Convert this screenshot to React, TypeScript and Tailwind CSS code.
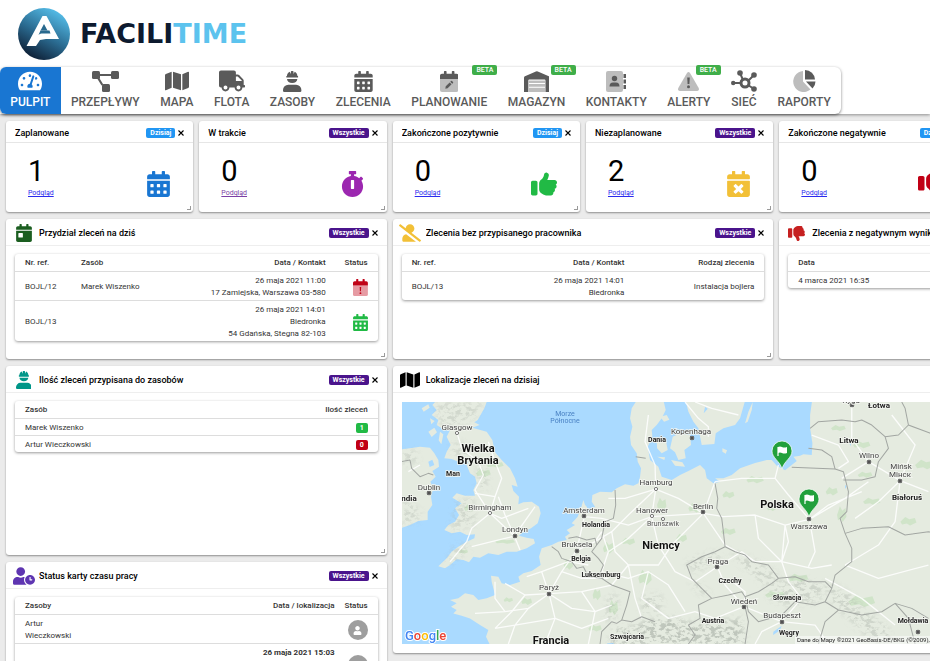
import React from "react";
import {
    FaTachometerAlt,
    FaMap,
    FaTruck,
    FaCalendarAlt,
    FaCalendarDay,
    FaCalendarTimes,
    FaStopwatch,
    FaUserSlash,
    FaUserClock,
    FaUser,
} from "react-icons/fa";
import { FaThumbsUp, FaThumbsDown } from "react-icons/fa6";

type Filter = "Dzisiaj" | "Wszystkie";

/* ---------- icons that the package does not have ---------- */

function FlowIcon({ className }: { className?: string }) {
    return (
        <svg viewBox="0 0 27 21" fill="currentColor" className={className}>
            <rect x="0" y="0" width="8" height="8" rx="1.5" />
            <rect x="19" y="0" width="8" height="8" rx="1.5" />
            <rect x="10" y="13" width="8" height="8" rx="1.5" />
            <path d="M7 3h13v2H7zM5.500 8l1.800-1 4 6.500-1.800 1z" />
        </svg>
    );
}

function HelmetIcon({ className }: { className?: string }) {
    return (
        <svg viewBox="0 0 448 512" fill="currentColor" className={className}>
            <path d="M88 160h272a8 8 0 0 0 8-8v-24a8 8 0 0 0-8-8h-8c0-46-27-86-66-104l-30 59V16a16 16 0 0 0-16-16h-32a16 16 0 0 0-16 16v59L162 16c-39 18-66 58-66 104h-8a8 8 0 0 0-8 8v24a8 8 0 0 0 8 8z" />
            <path d="M97 192a128 112 0 0 0 254 0z" />
            <path d="M320 336H128A128 128 0 0 0 0 464v16a32 32 0 0 0 32 32h384a32 32 0 0 0 32-32v-16a128 128 0 0 0-128-128z" />
        </svg>
    );
}

function PlanIcon({ className }: { className?: string }) {
    return (
        <svg viewBox="0 0 448 512" fill="currentColor" className={className}>
            <path d="M0 192h448v272a48 48 0 0 1-48 48H48a48 48 0 0 1-48-48z" opacity=".4" />
            <path d="M448 112v80H0v-80a48 48 0 0 1 48-48h48V16a16 16 0 0 1 16-16h32a16 16 0 0 1 16 16v48h128V16a16 16 0 0 1 16-16h32a16 16 0 0 1 16 16v48h48a48 48 0 0 1 48 48z" />
            <path d="M130 430l10-56 96-96 46 46-96 96zM250 264l20-20q12-8 22 0l26 26q8 10 0 22l-20 20z" />
        </svg>
    );
}

function WarehouseIcon({ className }: { className?: string }) {
    return (
        <svg viewBox="0 0 27 22" fill="currentColor" className={className}>
            <path d="M5 10h17v12H5z" opacity=".4" />
            <path d="M5 12.500h17v1H5zM5 16.500h17v1H5z" fill="white" />
            <path d="M1 5.500L12.500.5q1-.5 2 0L26 5.500q1 .5 1 1.500v15h-4.500V10q0-1-1-1h-16q-1 0-1 1v12H0V7q0-1 1-1.500z" />
        </svg>
    );
}

function ContactsIcon({ className }: { className?: string }) {
    return (
        <svg viewBox="0 0 20 21" fill="currentColor" className={className}>
            <rect width="17" height="21" rx="2" opacity=".4" />
            <path d="M17.500 3H20v4h-2.500zM17.500 8.500H20v4h-2.500zM17.500 14H20v4h-2.500z" />
            <circle cx="8.500" cy="7.500" r="2.700" />
            <path d="M3.500 15.500q0-4 3.500-4h3q3.500 0 3.500 4z" />
        </svg>
    );
}

function AlertIcon({ className }: { className?: string }) {
    return (
        <svg viewBox="0 0 21 19" fill="currentColor" className={className}>
            <path d="M9 1q1.500-2 3 0l8.700 15q.8 2.500-1.500 3H1.800Q-.5 18.500.3 16z" opacity=".4" />
            <path d="M9.200 5.500h2.600l-.4 6.500H9.600z" />
            <circle cx="10.500" cy="14.700" r="1.500" />
        </svg>
    );
}

function NetworkIcon({ className }: { className?: string }) {
    return (
        <svg viewBox="0 0 26 22" className={className}>
            <g stroke="currentColor" strokeWidth="2">
                <path d="M9 3l3 7M2 13h8M23 5l-6 6M23 19l-6-4" />
                <circle cx="14" cy="13" r="4" fill="none" strokeWidth="3" />
            </g>
            <g fill="currentColor">
                <circle cx="9" cy="3" r="2.800" />
                <circle cx="2.200" cy="13" r="2.200" />
                <circle cx="23" cy="5" r="2.800" />
                <circle cx="23" cy="19" r="2.800" />
            </g>
        </svg>
    );
}

function PieIcon({ className }: { className?: string }) {
    return (
        <svg viewBox="0 0 23 22" fill="currentColor" className={className}>
            <path d="M10 1v10.500l7.500 8A10.500 10.500 0 1 1 10 1z" opacity=".4" />
            <path d="M12 0a10 10 0 0 1 10 9.500H12z" />
            <path d="M13 11.500h9.500a10 10 0 0 1-3 7z" />
        </svg>
    );
}

function CalendarAlertIcon({ className }: { className?: string }) {
    return (
        <svg viewBox="0 0 448 512" fill="currentColor" className={className}>
            <path d="M0 192h448v272a48 48 0 0 1-48 48H48a48 48 0 0 1-48-48z" opacity=".4" />
            <path d="M448 112v80H0v-80a48 48 0 0 1 48-48h48V16a16 16 0 0 1 16-16h32a16 16 0 0 1 16 16v48h128V16a16 16 0 0 1 16-16h32a16 16 0 0 1 16 16v48h48a48 48 0 0 1 48 48z" />
            <path d="M202 240h44l-6 130h-32z" />
            <circle cx="224" cy="426" r="28" />
        </svg>
    );
}

function CloseIcon() {
    return (
        <svg viewBox="0 0 6 6" className="size-[6px]" stroke="black" strokeWidth="1.100">
            <path d="M.5.5l5 5M5.500.5l-5 5" />
        </svg>
    );
}

function Logo() {
    return (
        <div className="flex items-center gap-[10px]">
            <svg viewBox="0 0 52 52" className="size-[52px]">
                <defs>
                    <linearGradient id="logo" x1="0.800" y1="0.100" x2="0.300" y2="1">
                        <stop offset="0" stopColor="#53b9e4" />
                        <stop offset="0.500" stopColor="#2b6c92" />
                        <stop offset="1" stopColor="#0d1d33" />
                    </linearGradient>
                </defs>
                <circle cx="26" cy="26" r="26" fill="url(#logo)" />
                <path fill="white" d="M24.500 8h4L41 31H28l-6 1-4 6H8.500z" />
                <path fill="#29698e" d="M26 16l3.500 6.500H22.500z" />
                <path fill="#29698e" d="M20.500 27q1-1.500 3-1.500h9l-1-3h-9z" />
            </svg>
            <span className="font-['DejaVu_Sans',sans-serif] text-[27px] leading-8 font-bold text-[#0d1a2f]">
                FACILI<span className="text-[#5cc3ee]">TIME</span>
            </span>
        </div>
    );
}

const menu = [
    { label: "PULPIT", icon: <FaTachometerAlt className="size-6" />, active: true },
    { label: "PRZEPŁYWY", icon: <FlowIcon className="h-[21px]" /> },
    { label: "MAPA", icon: <FaMap className="h-[22px] w-6" /> },
    { label: "FLOTA", icon: <FaTruck className="h-[22px] w-[26px]" /> },
    { label: "ZASOBY", icon: <HelmetIcon className="h-[21px]" /> },
    { label: "ZLECENIA", icon: <FaCalendarAlt className="size-[21px]" /> },
    { label: "PLANOWANIE", icon: <PlanIcon className="h-[21px]" />, beta: true },
    { label: "MAGAZYN", icon: <WarehouseIcon className="h-[21px]" />, beta: true },
    { label: "KONTAKTY", icon: <ContactsIcon className="h-[21px]" /> },
    { label: "ALERTY", icon: <AlertIcon className="h-[19px]" />, beta: true },
    { label: "SIEĆ", icon: <NetworkIcon className="h-[22px]" /> },
    { label: "RAPORTY", icon: <PieIcon className="h-[22px]" /> },
];

function Header() {
    return (
        <header className="relative z-10 bg-white shadow-[0_1px_3px_rgba(0,0,0,0.4)]">
            <div className="flex h-[67px] items-center pl-[18px]">
                <Logo />
            </div>
            <nav className="flex w-[841px] rounded-md shadow-[0_1px_3px_rgba(0,0,0,0.5)]">
                {menu.map((item) => (
                    <a
                        key={item.label}
                        href="#"
                        className={
                            item.active
                                ? "relative flex h-[47px] flex-auto flex-col items-center rounded-l-md bg-[#1976d2] px-[10px] text-white"
                                : "relative flex h-[47px] flex-auto flex-col items-center px-[10px] text-[#5a5a5a]"
                        }
                    >
                        <span className="flex h-7 items-center">{item.icon}</span>
                        <span className="text-[12px] leading-[14px] font-medium">{item.label}</span>
                        {item.beta && (
                            <span className="absolute -top-[2px] right-0 rounded-[2px] bg-[#3fae49] px-1 text-[7px] leading-[10px] font-medium text-white">
                                BETA
                            </span>
                        )}
                    </a>
                ))}
            </nav>
        </header>
    );
}

function FilterBadge({ filter }: { filter: Filter }) {
    return (
        <button
            className={
                filter === "Dzisiaj"
                    ? "rounded-[2px] bg-[#2196f3] px-1 text-[7px] leading-[10px] font-bold text-white"
                    : "rounded-[2px] bg-[#4a148c] px-1 text-[7px] leading-[10px] font-bold text-white"
            }
        >
            {filter}
        </button>
    );
}

type CardProps = {
    title: string;
    filter?: Filter;
    icon?: React.ReactNode;
    className?: string;
    children: React.ReactNode;
};

function Card({ title, filter, icon, className = "", children }: CardProps) {
    return (
        <section className={`relative rounded-[3px] bg-white shadow-[0_1px_2px_rgba(0,0,0,0.4)] ${className}`}>
            <div
                className={
                    icon
                        ? "flex h-[27px] items-center border-b border-[#eeeeee] pt-[2px] pr-[9px] pl-[6px]"
                        : "flex h-[22px] items-center border-b border-[#e6e6e6] px-[9px] pt-[2px]"
                }
            >
                {icon && <span className="mr-1 flex w-[23px] justify-center">{icon}</span>}
                <h2 className="flex-1 truncate text-[9px] leading-3 font-medium text-black">{title}</h2>
                {filter && (
                    <>
                        <FilterBadge filter={filter} />
                        <button aria-label="Zamknij" className="ml-[3px]">
                            <CloseIcon />
                        </button>
                    </>
                )}
            </div>
            {children}
            {filter && <span className="absolute right-[2px] bottom-[2px] size-1 border-r border-b border-[#9a9a9a]" />}
        </section>
    );
}

type StatProps = {
    title: string;
    filter: Filter;
    value: number;
    visited?: boolean;
    icon: React.ReactNode;
};

function StatCard({ title, filter, value, visited, icon }: StatProps) {
    return (
        <Card title={title} filter={filter}>
            <div className="flex h-[69px] items-end justify-between pr-[23px] pb-[13px] pl-[22px]">
                <div className="flex flex-col">
                    <span className="text-[29px] leading-[32px] text-black">{value}</span>
                    <a
                        href="#"
                        className={
                            visited
                                ? "text-[7px] leading-3 text-[#7b3fa5] underline"
                                : "text-[7px] leading-3 text-[#2a2aee] underline"
                        }
                    >
                        Podgląd
                    </a>
                </div>
                <span className="mb-[2px]">{icon}</span>
            </div>
        </Card>
    );
}

const tableBox = "mx-[9px] mt-2 rounded-[3px] shadow-[0_1px_3px_rgba(0,0,0,0.4)]";
const table =
    "w-full text-[8px] leading-3 text-[#333333] [&_td]:px-[5px] [&_td]:pt-[3px] [&_td]:pb-px [&_th]:px-[5px] [&_th]:pt-[3px] [&_th]:pb-[2px] [&_th]:font-medium [&_tr>*:first-child]:pl-[10px] [&_tr>*:last-child]:pr-[10px] [&_tr:not(:last-child)]:border-b [&_thead_tr]:border-b [&_tr]:border-[#dddddd]";

function AssignedToday() {
    return (
        <div className={tableBox}>
            <table className={table}>
                <thead>
                    <tr className="text-left">
                        <th className="w-[61px]">Nr. ref.</th>
                        <th>Zasób</th>
                        <th className="text-right">Data / Kontakt</th>
                        <th className="w-[47px] text-right">Status</th>
                    </tr>
                </thead>
                <tbody>
                    <tr>
                        <td>BOJL/12</td>
                        <td>Marek Wiszenko</td>
                        <td className="text-right">
                            26 maja 2021 11:00
                            <br />
                            17 Zamiejska, Warszawa 03-580
                        </td>
                        <td>
                            <CalendarAlertIcon className="ml-auto h-[17px] text-[#c00418]" />
                        </td>
                    </tr>
                    <tr>
                        <td>BOJL/13</td>
                        <td></td>
                        <td className="text-right">
                            26 maja 2021 14:01
                            <br />
                            Biedronka
                            <br />
                            54 Gdańska, Stegna 82-103
                        </td>
                        <td>
                            <FaCalendarAlt className="ml-auto h-[17px] w-[15px] text-[#21ba45]" />
                        </td>
                    </tr>
                </tbody>
            </table>
        </div>
    );
}

function Unassigned() {
    return (
        <div className={tableBox}>
            <table className={table}>
                <thead>
                    <tr>
                        <th className="text-left">Nr. ref.</th>
                        <th className="text-right">Data / Kontakt</th>
                        <th className="w-[135px] text-right">Rodzaj zlecenia</th>
                    </tr>
                </thead>
                <tbody>
                    <tr>
                        <td>BOJL/13</td>
                        <td className="text-right">
                            26 maja 2021 14:01
                            <br />
                            Biedronka
                        </td>
                        <td className="text-right">Instalacja bojlera</td>
                    </tr>
                </tbody>
            </table>
        </div>
    );
}

function NegativeResults() {
    return (
        <div className={tableBox}>
            <table className={table}>
                <thead>
                    <tr>
                        <th className="text-left">Data</th>
                    </tr>
                </thead>
                <tbody>
                    <tr>
                        <td>4 marca 2021 16:35</td>
                    </tr>
                </tbody>
            </table>
        </div>
    );
}

function OrdersPerResource() {
    return (
        <div className={tableBox}>
            <table className={table}>
                <thead>
                    <tr>
                        <th className="text-left">Zasób</th>
                        <th className="text-right">Ilość zleceń</th>
                    </tr>
                </thead>
                <tbody>
                    <tr>
                        <td>Marek Wiszenko</td>
                        <td>
                            <span className="ml-auto block w-3 rounded-[2px] bg-[#21ba45] text-center text-[7px] leading-[10px] font-bold text-white">
                                1
                            </span>
                        </td>
                    </tr>
                    <tr>
                        <td>Artur Wieczkowski</td>
                        <td>
                            <span className="ml-auto block w-3 rounded-[2px] bg-[#c10015] text-center text-[7px] leading-[10px] font-bold text-white">
                                0
                            </span>
                        </td>
                    </tr>
                </tbody>
            </table>
        </div>
    );
}

function Avatar() {
    return (
        <span className="ml-auto flex size-5 items-center justify-center rounded-full bg-[#9e9e9e] text-white">
            <FaUser className="size-[9px]" />
        </span>
    );
}

function TimeCards() {
    return (
        <div className={tableBox}>
            <table className={table}>
                <thead>
                    <tr>
                        <th className="w-[75px] text-left">Zasoby</th>
                        <th className="text-right">Data / lokalizacja</th>
                        <th className="w-9 text-right">Status</th>
                    </tr>
                </thead>
                <tbody>
                    <tr>
                        <td>
                            Artur
                            <br />
                            Wieczkowski
                        </td>
                        <td></td>
                        <td>
                            <Avatar />
                        </td>
                    </tr>
                    <tr>
                        <td>Marek Wiszenko</td>
                        <td className="text-right">
                            <b>26 maja 2021 15:03</b>
                            <br />
                            Wybrzeże Stanisława Wyspiańskiego 27, 50-370
                            <br />
                            Wrocław
                        </td>
                        <td>
                            <Avatar />
                        </td>
                    </tr>
                </tbody>
            </table>
        </div>
    );
}

/* ---------- map ---------- */

type Place = { name: string; x: number; y: number; kind: "city" | "town" | "small" | "country" | "big" | "sea" };

const places: Place[] = [
    { name: "Morze", x: 163, y: 14, kind: "sea" },
    { name: "Północne", x: 163, y: 21, kind: "sea" },
    { name: "Glasgow", x: 55, y: 28, kind: "city" },
    { name: "Wielka", x: 76, y: 50, kind: "big" },
    { name: "Brytania", x: 76, y: 62, kind: "big" },
    { name: "Man", x: 51, y: 74, kind: "small" },
    { name: "Dublin", x: 27, y: 88, kind: "city" },
    { name: "ndia", x: 7, y: 99, kind: "country" },
    { name: "Birmingham", x: 88, y: 108, kind: "city" },
    { name: "Londyn", x: 113, y: 130, kind: "city" },
    { name: "Amsterdam", x: 182, y: 111, kind: "city" },
    { name: "Holandia", x: 194, y: 125, kind: "small" },
    { name: "Bruksela", x: 175, y: 145, kind: "city" },
    { name: "Belgia", x: 179, y: 159, kind: "small" },
    { name: "Luksemburg", x: 199, y: 175, kind: "small" },
    { name: "Paryż", x: 147, y: 188, kind: "city" },
    { name: "Francja", x: 149, y: 242, kind: "big" },
    { name: "Szwajcaria", x: 225, y: 237, kind: "small" },
    { name: "Dania", x: 255, y: 40, kind: "small" },
    { name: "Kopenhaga", x: 289, y: 32, kind: "city" },
    { name: "Hamburg", x: 254, y: 83, kind: "city" },
    { name: "Hanower", x: 250, y: 111, kind: "city" },
    { name: "Brunszwik", x: 261, y: 124, kind: "town" },
    { name: "Berlin", x: 301, y: 107, kind: "city" },
    { name: "Niemcy", x: 259, y: 147, kind: "big" },
    { name: "Polska", x: 375, y: 106, kind: "big" },
    { name: "Warszawa", x: 407, y: 127, kind: "city" },
    { name: "Praga", x: 316, y: 162, kind: "city" },
    { name: "Czechy", x: 328, y: 181, kind: "small" },
    { name: "Słowacja", x: 385, y: 198, kind: "small" },
    { name: "Wiedeń", x: 342, y: 202, kind: "city" },
    { name: "Austria", x: 311, y: 221, kind: "small" },
    { name: "Budapeszt", x: 380, y: 216, kind: "city" },
    { name: "Węgry", x: 387, y: 233, kind: "small" },
    { name: "Ryga", x: 449, y: 1, kind: "city" },
    { name: "Łotwa", x: 477, y: 6, kind: "country" },
    { name: "Litwa", x: 447, y: 41, kind: "country" },
    { name: "Wilno", x: 467, y: 56, kind: "city" },
    { name: "Mińsk", x: 499, y: 67, kind: "city" },
    { name: "Мінск", x: 498, y: 75, kind: "city" },
    { name: "Białoruś", x: 505, y: 98, kind: "country" },
    { name: "Mołdawia", x: 511, y: 221, kind: "small" },
];

const placeClass = {
    city: "fill-[#444444] stroke-[#f4f6f1] text-[8px]",
    town: "fill-[#555555] stroke-[#f4f6f1] text-[7px]",
    small: "fill-[#222222] stroke-[#f4f6f1] text-[7px] font-bold",
    country: "fill-[#222222] stroke-[#f4f6f1] text-[8px] font-bold",
    big: "fill-[#111111] stroke-[#f4f6f1] text-[11px] font-bold",
    sea: "fill-[#4a82c4] stroke-transparent text-[7px]",
};

const capitals = [
    [27, 91],
    [113, 134],
    [182, 114],
    [175, 149],
    [147, 192],
    [290, 36],
    [301, 110],
    [407, 117],
    [315, 165],
    [342, 205],
    [380, 220],
    [450, 3],
    [467, 60],
    [498, 79],
    [516, 230],
];

const towns = [
    [55, 31],
    [88, 111],
    [254, 87],
    [250, 114],
    [261, 117],
];

const pins = [
    [380, 49],
    [407, 97],
];

const roads = [
    "M358 513L285 445L240 375L265 330L250 290L200 250L185 200",
    "M285 445L300 395L320 340L300 290L280 230M300 395L240 385M285 445L230 490L215 530L165 590M358 513L290 530L230 545M358 513L420 425M358 513L375 555M358 513L330 450L310 395M285 445L320 460L400 430",
    "M462 686L440 620L395 635M462 686L390 690L330 655M462 686L400 730L330 740L240 745M462 686L500 620L545 557L568 455M462 686L560 680L650 660L700 600",
    "M462 686L480 760L450 837M400 730L360 780L340 837M480 760L560 790L640 760M462 686L530 730L600 740L650 720M390 690L350 740L300 790M500 620L560 640L640 640M440 620L520 590L580 600M330 740L300 700L300 650M560 680L600 740L580 837M300 790L360 780L480 760",
    "M545 557L600 530L650 500L700 450L782 372M568 455L620 460L700 480L770 455L925 445M620 500L640 560L620 620L700 640L760 620L820 660L870 740M650 500L660 560L700 600L790 600L830 540L925 445M782 372L850 400L925 445L960 350M770 455L790 540L840 620L900 650L967 605",
    "M782 372L780 300L750 230L760 150M782 372L690 400L640 400M770 455L782 372M700 600L720 700L740 760M640 560L700 520L770 455M620 500L600 530M760 620L740 700L820 760L900 740",
    "M925 445L985 455L1080 450L1170 480L1243 463L1350 400L1420 350M1243 463L1180 390L1140 340L1150 300M1170 480L1160 590L1080 590L990 540L925 445M1160 590L1250 610L1310 600M1243 463L1300 420L1400 380M1080 450L1090 520L1160 590M1243 463L1260 560L1240 605M1140 340L1040 340L960 350M1170 480L1180 530L1160 590",
    "M967 605L1040 560L1080 590M967 605L990 660L1047 725L1160 770M1047 725L960 760L900 740M1160 770L1220 700L1180 650L1160 590M1160 770L1100 800L1080 837M1160 770L1260 780L1300 837M1047 725L1050 680L1000 640",
    "M1250 210L1330 240L1360 290L1330 310M1420 290L1370 220L1370 120M1420 290L1515 347L1600 380M1515 347L1450 410L1380 460M1515 347L1500 470L1450 540L1350 600M1420 290L1340 340M1515 347L1560 240L1490 150",
    "M870 111L910 160L940 185L940 215M900 111L950 130L1030 150M75 300L40 320M1350 600L1450 640L1600 600M1290 640L1400 700L1500 780",
];

const borders = [
    "M470 545L490 560L500 580L530 590L545 610L565 605L580 635L620 640L650 660L705 680L695 720L680 765L665 775L650 770M520 520L545 515L575 525L600 520L605 540L590 560L610 580L625 600L615 625L625 640M605 540L620 520L630 470L655 460L662 420L660 375M722 275L752 280",
    "M650 770L620 800L615 837M680 765L710 770L740 755L780 770M960 355L968 400L965 430L980 460L985 500L990 545L960 560L920 575L875 600L890 640L920 670L950 700L1000 690L1040 680L1050 695L1090 680L1130 655L1150 640L1120 600L1070 590L1050 570L1020 560L990 545",
    "M950 700L910 720L915 760L880 780M1150 640L1200 635L1240 650L1290 650L1310 670L1320 630L1370 590L1370 550L1350 505L1335 460L1355 440L1360 380L1345 320L1320 312L1190 307M1050 695L1060 740L1090 770L1160 750L1200 710L1260 720L1290 710L1310 670",
    "M1240 250L1280 255L1310 275L1320 312M1345 345L1400 345L1440 335L1450 290L1480 250L1470 215L1430 180L1400 165L1380 170L1340 165L1270 170L1245 190M1470 215L1510 210L1540 180L1530 130L1520 111M1540 180L1580 195L1620 210M1350 505L1400 490L1480 485L1530 510L1600 500L1700 520",
    "M1290 710L1330 735L1400 750L1460 740L1500 715L1550 730L1600 760M1500 715L1540 760L1560 837M1330 735L1290 770L1270 837M1050 725L1060 770L1050 837M20 290L45 285L50 310L75 335L100 325L115 330M880 780L900 810L880 837",
];

const forests = [
    [265, 325, 22, 14],
    [300, 300, 26, 10],
    [225, 430, 18, 12],
    [330, 530, 30, 8],
    [205, 560, 14, 8],
    [395, 710, 16, 12],
    [340, 705, 14, 8],
    [520, 600, 14, 18],
    [655, 730, 14, 26],
    [605, 690, 12, 20],
    [600, 790, 20, 12],
    [640, 550, 16, 20],
    [700, 530, 20, 12],
    [750, 640, 20, 26],
    [860, 520, 16, 14],
    [900, 430, 20, 16],
    [800, 420, 14, 22],
    [1080, 345, 26, 12],
    [1000, 390, 18, 12],
    [1130, 430, 14, 10],
    [1000, 500, 22, 12],
    [1310, 380, 18, 14],
    [1340, 450, 14, 26],
    [1210, 640, 30, 14],
    [1410, 330, 22, 10],
    [1430, 410, 26, 12],
    [1540, 470, 24, 14],
    [1400, 240, 26, 12],
    [1330, 190, 22, 10],
    [1590, 300, 30, 16],
    [1400, 710, 40, 20],
    [1140, 690, 30, 12],
];

function OrdersMap() {
    return (
        <svg
            viewBox="0 0 750 242"
            preserveAspectRatio="xMinYMin slice"
            className="h-[242px] w-full"
            role="img"
            aria-label="Mapa zleceń"
        >
            <defs>
                {/* rough shading for hills and mountains */}
                <filter id="relief" x="0" y="0" width="100%" height="100%">
                    <feTurbulence type="fractalNoise" baseFrequency="0.060 0.090" numOctaves="4" seed="7" result="noise" />
                    <feColorMatrix
                        in="noise"
                        type="matrix"
                        values="0 0 0 0 0.380  0 0 0 0 0.420  0 0 0 0 0.370  6 0 0 0 -2.800"
                        result="rock"
                    />
                    <feGaussianBlur in="SourceAlpha" stdDeviation="9" result="soft" />
                    <feComposite in="rock" in2="soft" operator="in" />
                </filter>
            </defs>
            <rect width="750" height="242" fill="#aadaff" />
            <g transform="scale(0.3334) translate(-21 -111)" strokeLinejoin="round">
                <g fill="#e5ebe0">
                    <path d="M275 111L268 130L248 165L238 172L254 180L232 188L256 195L275 200L292 225L300 262L320 285L345 310L360 340L368 365L350 360L355 378L372 395L370 418L385 412L410 410L432 425L437 445L428 475L408 490L385 500L372 512L395 518L416 522L420 535L395 550L365 560L335 560L310 570L280 565L255 578L235 575L222 592L205 585L185 583L165 600L150 610L130 604L155 580L170 560L190 545L215 530L238 520L240 508L215 510L195 500L170 505L148 495L160 480L180 470L192 450L180 430L200 415L172 398L185 385L210 392L240 392L235 375L245 355L240 335L225 325L215 300L220 290L190 290L170 282L148 280L155 260L167 240L155 215L165 195L140 190L125 180L130 165L110 150L125 135L112 120L120 111Z" />
                    <path d="M100 200l18-12 8 14-16 14zM135 200l10 8-6 30-8-12zM80 130l20-12 4 10-18 12zM105 160l14 8-10 10zM170 322l8-6-4 12z" />
                    <path d="M0 255L45 250L75 245L105 248L118 265L130 285L132 305L112 318L122 335L106 350L115 370L108 395L112 420L98 440L98 465L70 468L45 480L0 495Z" />
                    <path d="M722 111L710 130L705 160L712 185L705 215L708 240L725 265L728 290L738 310L735 335L730 355L715 362L690 358L665 370L650 382L615 380L592 390L590 410L600 425L585 435L570 420L565 405L558 430L548 455L530 475L540 480L515 495L525 505L510 515L515 525L490 530L470 540L440 550L432 575L437 600L410 618L385 625L370 635L375 650L345 660L320 655L310 635L288 632L290 650L300 690L275 700L250 705L235 690L210 685L190 700L165 705L185 715L168 725L185 735L175 745L200 752L225 760L255 780L280 795L273 815L285 840L2300 840L2300 100L722 100Z" />
                </g>
                {/* Baltic */}
                <path
                    fill="#aadaff"
                    d="M805 105L812 135L800 160L785 180L770 195L772 215L758 245L765 285L790 305L800 335L830 345L855 330L880 318L915 300L930 315L935 340L955 355L975 350L960 340L985 340L1010 330L1035 310L1080 294L1115 285L1130 285L1145 302L1170 316L1190 300L1205 288L1195 275L1215 272L1225 268L1250 270L1252 235L1245 190L1245 150L1252 100Z"
                />
                <g fill="#e5ebe0">
                    <path d="M870 100L880 140L895 170L910 190L920 240L958 237L962 205L985 190L1020 180L1035 160L1052 100Z" />
                    <path d="M833 215L855 205L885 210L888 240L868 255L872 280L850 285L840 262L825 250ZM785 222L812 225L818 255L800 265L786 250ZM828 285L862 292L870 305L840 302ZM982 250l14 6-4 10-10-6zM1073 111L1060 140L1050 175L1058 170L1070 135ZM795 155l20-5 8 14-16 6zM786 275l24 2-2 8z" />
                </g>
                <g fill="#aadaff">
                    <path d="M575 425l12-8 8 14-14 12zM1362 230l6 4-2 10zM1135 800l25-18-6 14-20 14zM636 835l20-2v8h-22zM100 290l12-6 6 16-14 6zM930 125l8 6-12 14zM1350 360l5 4-5 8z" />
                </g>
                <g fill="#cbe3c4" opacity="0.800">
                    {forests.map(([x, y, rx, ry]) => (
                        <path
                            key={`${x}-${y}`}
                            d={`M${x - rx} ${y}l${rx * 0.6} ${-ry} ${rx * 0.5} ${ry * 0.5} ${rx * 0.7} ${-ry * 0.3} ${rx * 0.2} ${ry} ${-rx * 0.8} ${ry * 0.6} ${-rx * 0.4} ${-ry * 0.4} ${-rx * 0.6} ${ry * 0.2}z`}
                        />
                    ))}
                </g>
                <g filter="url(#relief)" opacity="0.600">
                    <path d="M125 111H265L235 160L170 185L130 175ZM165 240L200 230L240 270L190 285ZM185 410L235 400L240 480L165 495ZM20 260L60 255L70 290L25 300ZM20 400L70 430L80 460L20 480ZM245 290L270 280L280 370L250 370ZM180 540L230 540L180 590L150 600Z" opacity="0.500" />
                    <path d="M700 790L780 765L900 775L1040 760L1050 840H640L660 790Z" />
                    <path d="M740 770L830 755L890 780L880 837H750Z" />
                    <path d="M640 690L670 690L660 760L630 770ZM740 690L800 690L800 740L740 740ZM870 590L960 560L980 580L900 620ZM1000 555L1090 590L1150 630L1110 660L1050 610ZM890 640L950 690L920 690L890 660ZM1130 650L1220 640L1290 660L1270 710L1180 720L1120 700ZM1290 650L1360 680L1400 730L1470 780L1500 837H1440L1370 770L1310 710Z" opacity="0.600" />
                </g>
                <g fill="none" stroke="white" strokeWidth="4" opacity="0.850">
                    {roads.map((d) => (
                        <path key={d} d={d} />
                    ))}
                </g>
                <g fill="none" stroke="#a2a6a2" strokeWidth="3">
                    {borders.map((d) => (
                        <path key={d} d={d} />
                    ))}
                </g>
            </g>
            <g fill="#444444">
                {capitals.map(([x, y]) => (
                    <g key={`${x}-${y}`}>
                        <circle cx={x} cy={y} r="2.300" />
                        <circle cx={x} cy={y} r="1.500" fill="none" stroke="#bbbbbb" strokeWidth="0.400" />
                    </g>
                ))}
            </g>
            <g fill="white" stroke="#555555" strokeWidth="0.800">
                {towns.map(([x, y]) => (
                    <circle key={`${x}-${y}`} cx={x} cy={y} r="1.600" />
                ))}
            </g>
            <g textAnchor="middle" strokeWidth="1.500" className="[paint-order:stroke]">
                {places.map((place) => (
                    <text key={place.name} x={place.x} y={place.y} className={placeClass[place.kind]}>
                        {place.name}
                    </text>
                ))}
            </g>
            {pins.map(([x, y]) => (
                <g key={`${x}-${y}`} transform={`translate(${x} ${y})`}>
                    <path
                        d="M0 18C-2 10-10 7-10 0A10 10 0 0 1 10 0C10 7 2 10 0 18z"
                        fill="#22a03c"
                        stroke="white"
                        strokeWidth="0.700"
                    />
                    <path d="M-4-4v9" stroke="white" strokeWidth="1.200" />
                    <path d="M-4-4q2-1 4 0t5 0v6q-3 1-5 0t-4 0z" fill="white" />
                </g>
            ))}
            <text x="3" y="238" className="stroke-white text-[13px] font-medium [paint-order:stroke]" strokeWidth="2">
                <tspan fill="#4285f4">G</tspan>
                <tspan fill="#ea4335">o</tspan>
                <tspan fill="#fbbc05">o</tspan>
                <tspan fill="#4285f4">g</tspan>
                <tspan fill="#34a853">l</tspan>
                <tspan fill="#ea4335">e</tspan>
            </text>
            <rect x="393" y="234" width="357" height="8" fill="white" opacity="0.500" />
            <text x="395" y="240" className="fill-[#222222] text-[6px]">
                Dane do Mapy ©2021 GeoBasis-DE/BKG (©2009), Google, Inst. Geogr. Nacional
            </text>
        </svg>
    );
}

export default function App() {
    return (
        <div className="h-screen overflow-hidden bg-[#ebebeb] font-['Roboto',sans-serif]">
            <Header />
            <main className="grid w-full min-w-[1166px] grid-cols-6 gap-x-[6px] gap-y-[7px] px-[6px] pt-[7px]">
                <StatCard
                    title="Zaplanowane"
                    filter="Dzisiaj"
                    value={1}
                    icon={<FaCalendarAlt className="h-[26px] w-[23px] text-[#1976d2]" />}
                />
                <StatCard
                    title="W trakcie"
                    filter="Wszystkie"
                    value={0}
                    visited
                    icon={<FaStopwatch className="h-[26px] w-[23px] text-[#9c27b0]" />}
                />
                <StatCard
                    title="Zakończone pozytywnie"
                    filter="Dzisiaj"
                    value={0}
                    icon={<FaThumbsUp className="size-[26px] text-[#21ba45]" />}
                />
                <StatCard
                    title="Niezaplanowane"
                    filter="Wszystkie"
                    value={2}
                    icon={<FaCalendarTimes className="h-[26px] w-[23px] text-[#f2c037]" />}
                />
                <StatCard
                    title="Zakończone negatywnie"
                    filter="Dzisiaj"
                    value={0}
                    icon={<FaThumbsDown className="size-[26px] text-[#c10015]" />}
                />
                <StatCard
                    title="Pracownicy"
                    filter="Dzisiaj"
                    value={2}
                    icon={<FaUser className="size-[26px] text-[#1976d2]" />}
                />

                <Card
                    title="Przydział zleceń na dziś"
                    filter="Wszystkie"
                    icon={<FaCalendarDay className="h-[18px] w-4 text-[#1b5e20]" />}
                    className="col-span-2 min-h-[140px]"
                >
                    <AssignedToday />
                </Card>
                <Card
                    title="Zlecenia bez przypisanego pracownika"
                    filter="Wszystkie"
                    icon={<FaUserSlash className="h-[18px] w-[22px] text-[#f2c037]" />}
                    className="col-span-2"
                >
                    <Unassigned />
                </Card>
                <Card
                    title="Zlecenia z negatywnym wynikiem"
                    filter="Wszystkie"
                    icon={<FaThumbsDown className="size-[17px] text-[#c62020]" />}
                    className="col-span-2"
                >
                    <NegativeResults />
                </Card>

                <div className="col-span-2 flex flex-col gap-[7px]">
                    <Card
                        title="Ilość zleceń przypisana do zasobów"
                        filter="Wszystkie"
                        icon={<HelmetIcon className="h-[18px] text-[#009688]" />}
                        className="min-h-[189px]"
                    >
                        <OrdersPerResource />
                    </Card>
                    <Card
                        title="Status karty czasu pracy"
                        filter="Wszystkie"
                        icon={<FaUserClock className="h-[18px] w-[22px] text-[#5e35b1]" />}
                        className="min-h-[189px]"
                    >
                        <TimeCards />
                    </Card>
                </div>
                <Card
                    title="Lokalizacje zleceń na dzisiaj"
                    icon={<FaMap className="h-[18px] w-5 text-black" />}
                    className="col-span-4 self-start"
                >
                    <div className="px-[9px] pt-[9px] pb-[9px]">
                        <OrdersMap />
                    </div>
                </Card>
            </main>
        </div>
    );
}
